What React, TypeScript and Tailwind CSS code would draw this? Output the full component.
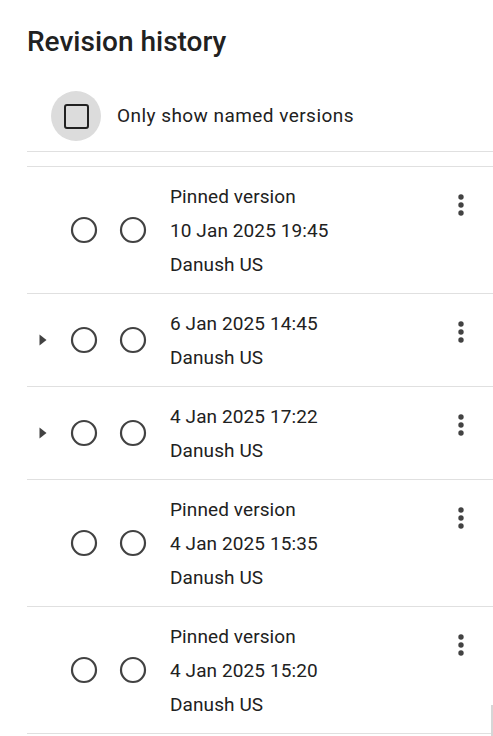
import React from "react";

type Revision = {
  id: number;
  pinned: boolean;
  date: string;
  author: string;
  expandable: boolean;
};

const revisions: Revision[] = [
  { id: 1, pinned: true, date: "10 Jan 2025 19:45", author: "Danush US", expandable: false },
  { id: 2, pinned: false, date: "6 Jan 2025 14:45", author: "Danush US", expandable: true },
  { id: 3, pinned: false, date: "4 Jan 2025 17:22", author: "Danush US", expandable: true },
  { id: 4, pinned: true, date: "4 Jan 2025 15:35", author: "Danush US", expandable: false },
  { id: 5, pinned: true, date: "4 Jan 2025 15:20", author: "Danush US", expandable: false },
];

const Radio = () => (
  <svg width="28" height="28" viewBox="0 0 28 28" className="shrink-0">
    <circle cx="14" cy="14" r="12" fill="none" stroke="#424242" strokeWidth="2.2" />
  </svg>
);

const Kebab = () => (
  <svg width="8" height="24" viewBox="0 0 8 24">
    <circle cx="4" cy="4" r="2.7" fill="#424242" />
    <circle cx="4" cy="12" r="2.7" fill="#424242" />
    <circle cx="4" cy="20" r="2.7" fill="#424242" />
  </svg>
);

const Caret = () => (
  <svg width="8" height="12" viewBox="0 0 8 12">
    <path d="M0.5 0.5 L7.5 6 L0.5 11.5 Z" fill="#424242" />
  </svg>
);

const RevisionRow = ({ rev }: { rev: Revision }) => (
  <div className="flex border-b border-[#e0e0e0]">
    <div className="flex items-center self-center w-[143px] shrink-0">
      <div className="w-[43px] pl-[12px] flex items-center">
        {rev.expandable && <Caret />}
      </div>
      <Radio />
      <div className="w-[21px]" />
      <Radio />
    </div>
    <div className="flex-1 pt-[13px] pb-[11px] text-[19px] leading-[34px] tracking-[0.1px] text-[#212121]">
      {rev.pinned && <div>Pinned version</div>}
      <div>{rev.date}</div>
      <div>{rev.author}</div>
    </div>
    <div className="w-12 h-12 mt-[14px] mr-[8px] flex items-center justify-center">
      <Kebab />
    </div>
  </div>
);

const App = () => {
  return (
    <div
      className="relative w-[493px] h-[736px] overflow-hidden bg-white pl-[27px]"
      style={{ fontFamily: "Roboto, 'Noto Sans', sans-serif" }}
    >
      <h1 className="pt-[24px] text-[28px] leading-[36px] font-medium text-[#212121]">
        Revision history
      </h1>
      <div className="flex items-center mt-[31px] h-[50px]">
        <div className="ml-[24px] w-[50px] h-[50px] rounded-full bg-[#dcdcdc] flex items-center justify-center">
          <div className="w-[25px] h-[25px] rounded-[3px] border-[2.5px] border-[#212121]" />
        </div>
        <span className="ml-[16px] text-[19px] tracking-[0.45px] text-[#212121]">
          Only show named versions
        </span>
      </div>
      <div className="mt-[10px] border-b border-[#e0e0e0]" />
      <div className="mt-[14px] border-t border-[#e0e0e0]">
        {revisions.map((rev) => (
          <RevisionRow key={rev.id} rev={rev} />
        ))}
      </div>
      <div className="absolute right-0 top-[705px] w-[2px] h-[31px] bg-[#d6d6d6]" />
    </div>
  );
};

export default App;
